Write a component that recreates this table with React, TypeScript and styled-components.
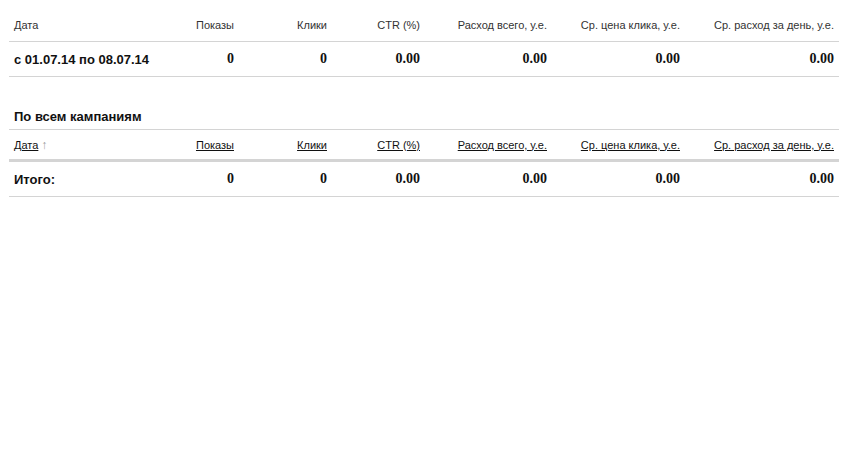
import styled, { createGlobalStyle } from 'styled-components';

const GlobalStyle = createGlobalStyle`
	body {
		margin: 8px 4px 8px 9px;
		background: #fff;
		font-family: "Liberation Sans", Arial, sans-serif;
		color: #000;
	}
`;

interface Column {
	title: string;
	width: number;
}

const COLUMNS: Column[] = [
	{ title: 'Дата', width: 150 },
	{ title: 'Показы', width: 80 },
	{ title: 'Клики', width: 93 },
	{ title: 'CTR (%)', width: 93 },
	{ title: 'Расход всего, у.е.', width: 127 },
	{ title: 'Ср. цена клика, у.е.', width: 133 },
	{ title: 'Ср. расход за день, у.е.', width: 154 },
];

const VALUES = ['0', '0', '0.00', '0.00', '0.00', '0.00'];

const StatsTable = ({ label, sortable }: { label: string; sortable?: boolean }) => (
	<Table $bordered={sortable}>
		<colgroup>
			{COLUMNS.map((col) => (
				<col key={col.title} style={{ width: col.width }} />
			))}
		</colgroup>
		<thead>
			<tr>
				{COLUMNS.map((col, index) =>
					sortable ? (
						<Head key={col.title} $first={index === 0} $sortable>
							<SortLink href="#">{col.title}</SortLink>
							{index === 0 && <Arrow>↑</Arrow>}
						</Head>
					) : (
						<Head key={col.title} $first={index === 0}>
							{col.title}
						</Head>
					)
				)}
			</tr>
		</thead>
		<tbody>
			<tr>
				<Label>{label}</Label>
				{VALUES.map((value, index) => (
					<Value key={index}>{value}</Value>
				))}
			</tr>
		</tbody>
	</Table>
);

const App = () => (
	<>
		<GlobalStyle />
		<Page>
			<StatsTable label="с 01.07.14 по 08.07.14" />
			<Title>По всем кампаниям</Title>
			<StatsTable label="Итого:" sortable />
		</Page>
	</>
);

const Page = styled.div`
	width: 830px;
`;

const Table = styled.table<{ $bordered?: boolean }>`
	width: 830px;
	border-collapse: collapse;
	table-layout: fixed;
	border-top: ${(p) => (p.$bordered ? '1px solid #d4d4d4' : 'none')};
`;

const Head = styled.th<{ $first?: boolean; $sortable?: boolean }>`
	height: ${(p) => (p.$sortable ? '29px' : '33px')};
	padding: 0 5px;
	text-align: ${(p) => (p.$first ? 'left' : 'right')};
	font-size: 11px;
	font-weight: normal;
	color: #333;
	white-space: nowrap;
	border-bottom: ${(p) => (p.$sortable ? '3px solid #d4d4d4' : '1px solid #d4d4d4')};
	vertical-align: middle;
`;

const SortLink = styled.a`
	color: #111;
	text-decoration: underline;
`;

const Arrow = styled.span`
	margin-left: 3px;
	font-size: 12px;
	color: #999;
`;

const Label = styled.td`
	height: 34px;
	padding: 0 5px;
	text-align: left;
	font-size: 13px;
	font-weight: bold;
	color: #111;
	white-space: nowrap;
	border-bottom: 1px solid #d4d4d4;
`;

const Value = styled.td`
	height: 34px;
	padding: 0 5px;
	text-align: right;
	font-family: "Liberation Serif", "Times New Roman", serif;
	font-size: 14px;
	font-weight: bold;
	color: #111;
	border-bottom: 1px solid #d4d4d4;
`;

const Title = styled.h3`
	margin: 0;
	padding: 32px 5px 5px;
	font-size: 13px;
	font-weight: bold;
	color: #111;
`;

export default App;
